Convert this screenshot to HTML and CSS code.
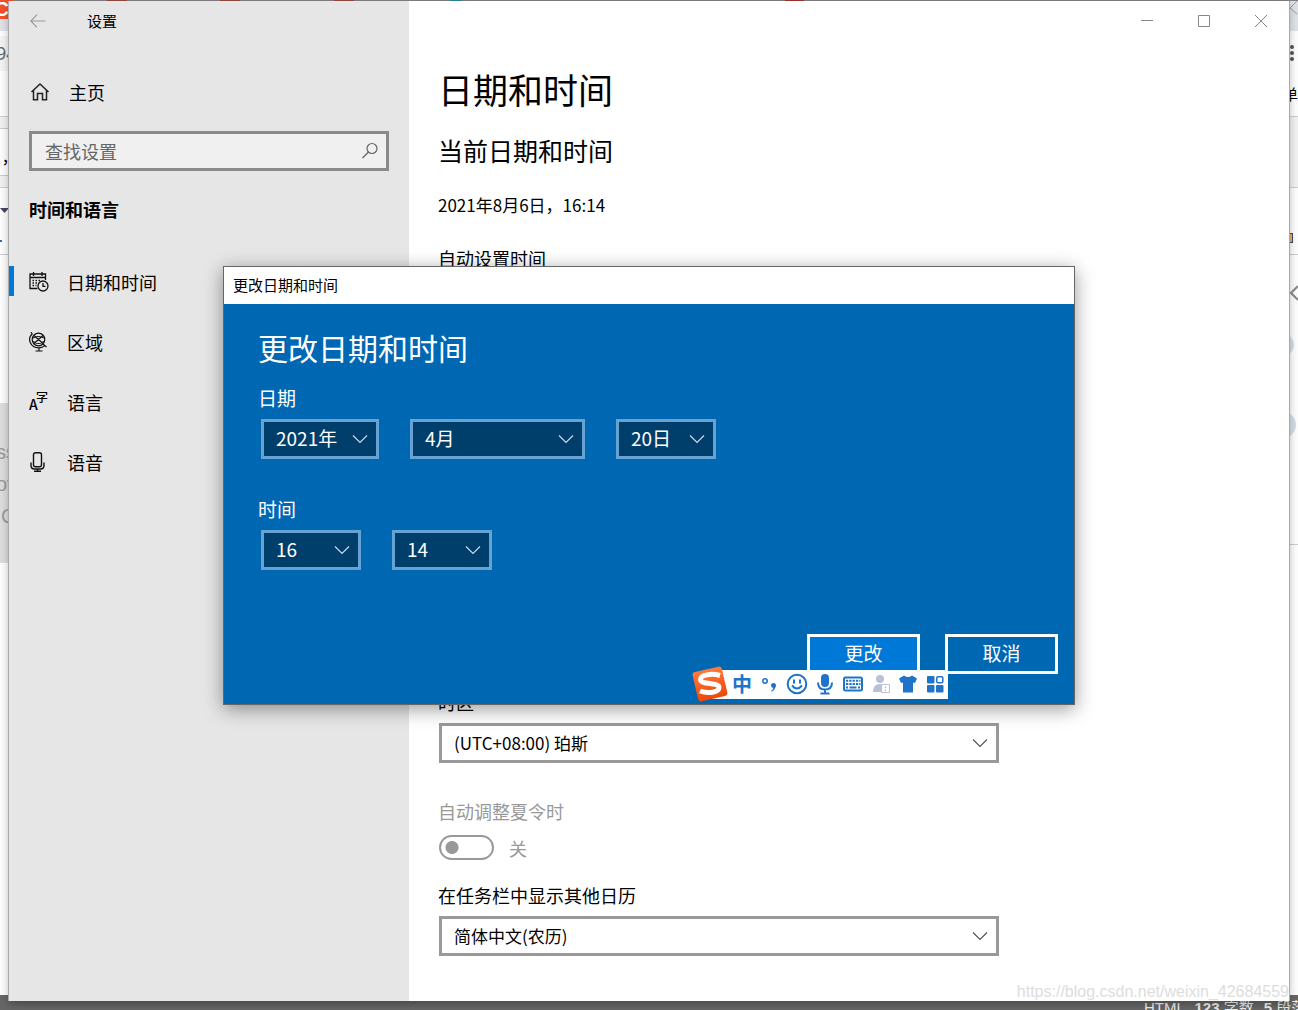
FILE: index.html
```html
<!DOCTYPE html>
<html lang="zh-CN">
<head>
<meta charset="utf-8">
<meta name="viewport" content="width=device-width, initial-scale=1">
<title>设置</title>
<link rel="stylesheet" href="styles.css">
</head>
<body>
<svg class="defs" aria-hidden="true">
  <symbol id="chevron" viewBox="0 0 16 10"><path d="M1 1.5 8 8.5 15 1.5" fill="none" stroke="currentColor" stroke-width="1.2"/></symbol>
</svg>
<div class="desktop">
  <div class="browser" aria-hidden="true">
    <div class="tabs"></div>
    <div class="page">
      <div class="edge">
        <div class="band favicon">C</div>
        <div class="band tabstrip tabstrip-left"></div>
        <div class="band gap"></div>
        <div class="band address">94</div>
        <div class="band bookmarks"></div>
        <div class="band shade"></div>
        <div class="band editor">,</div>
        <div class="band shade"></div>
        <div class="band tools"><svg width="9" height="5"><path d="M0 0h9L4.500 5z" fill="#446"/></svg><i class="dash"></i></div>
        <div class="band blank"></div>
        <div class="band code"><span>ss</span><span>ov</span><span>C</span></div>
      </div>
      <div class="edge">
        <div class="band tabstrip tabstrip-right"><svg width="9" height="14"><path d="M8 0 1 7l7 6" fill="none" stroke="#999"/></svg></div>
        <div class="band menu"><svg width="5" height="18" fill="#555"><circle cx="2" cy="3" r="2"/><circle cx="2" cy="9" r="2"/><circle cx="2" cy="15" r="2"/></svg></div>
        <div class="band save">单</div>
        <div class="band shade shade-tall"></div>
        <div class="band hint"><i></i></div>
        <div class="band rail"><svg width="8" height="260" fill="none"><path d="M8 1 1 8l7 7" stroke="#888" stroke-width="2"/><circle cx="-7" cy="60" r="11" fill="#d7dde3"/><circle cx="-7" cy="140" r="13" fill="#d3dce5"/></svg></div>
      </div>
    </div>
    <div class="status"><span class="status-text">HTML <b>123</b> 字数 <b>5</b> 段落</span></div>
  </div>

  <div class="window">
    <aside class="sidebar">
      <header class="titlebar">
        <button class="back" aria-label="后退"><svg width="16" height="14" viewBox="0 0 16 14"><path d="M15.500 7H1M7 .7.8 7 7 13.300" fill="none" stroke="#999" stroke-width="1.100"/></svg></button>
        <span class="app-name">设置</span>
      </header>
      <a class="home" href="#">
        <svg width="20" height="20" viewBox="0 0 20 20" fill="none" stroke="#222" stroke-width="1.500"><path d="M1.500 10 10 2l8.500 8M3.500 8.500v9.200h4v-6.200h5v6.200h4V8.500"/></svg>
        主页
      </a>
      <label class="search">
        <input type="text" placeholder="查找设置" aria-label="查找设置">
        <svg width="18" height="18" viewBox="0 0 18 18" fill="none" stroke="#666" stroke-width="1.200"><circle cx="11" cy="6.500" r="5"/><path d="M7.500 10 1.500 16"/></svg>
      </label>
      <h2 class="category">时间和语言</h2>
      <nav class="nav">
        <a class="active" href="#">
          <svg width="20" height="20" viewBox="0 0 20 20" fill="none" stroke="#111" stroke-width="1.300"><path d="M8.500 16.500H1V2h15.500v6M1 5.500h15.500M4.500 0v4M13 0v4"/><path d="M3.500 8.500h9M3.500 11h6M3.500 13.500h4" stroke-dasharray="1.500 1.500"/><circle cx="14" cy="14" r="5"/><path d="M14 11v3.300h2.500"/></svg>
          日期和时间
        </a>
        <a href="#">
          <svg width="20" height="20" viewBox="0 0 20 20" fill="none" stroke="#111" stroke-width="1.200"><circle cx="9.500" cy="7.500" r="6.300"/><path d="M2 0l1.500 2.500M3 2C-2 7 1.500 15.700 9.500 15.900c3 0 5-1 6.500-2.500M14 12l3.500 3M10 16v3M6.500 19h7M5 3.500l9 8M5 11.500l9-8M4 6q5.500-3 11 0M4 9.500q5.500 4 11 0"/></svg>
          区域
        </a>
        <a href="#">
          <svg class="glyphs" width="20" height="20" viewBox="0 0 20 20"><text x="0" y="18" font-size="14">A</text><text x="7" y="10" font-size="12">字</text></svg>
          语言
        </a>
        <a href="#">
          <svg width="20" height="20" viewBox="0 0 20 20" fill="none" stroke="#111" stroke-width="1.400"><rect x="4.500" y=".7" width="8" height="14" rx="2"/><path d="M2 10.500v3q0 3.500 3.500 3.500h6q3.500 0 3.500-3.500v-3M8.500 17v2.500M5 19.300h7"/></svg>
          语音
        </a>
      </nav>
    </aside>

    <main class="main">
      <header class="titlebar controls">
        <button aria-label="最小化"><svg width="12" height="12"><path d="M0 5.500h12" stroke="#888"/></svg></button>
        <button aria-label="最大化"><svg width="12" height="12"><path d="M.5.5h11v11H.5z" fill="none" stroke="#888"/></svg></button>
        <button aria-label="关闭"><svg width="12" height="12"><path d="M0 0l12 12M12 0 0 12" stroke="#888"/></svg></button>
      </header>
      <div class="content">
        <h1>日期和时间</h1>
        <h2 class="section">当前日期和时间</h2>
        <p class="now">2021年8月6日，16:14</p>
        <p class="auto">自动设置时间</p>
        <label class="zone-label" for="zone">时区</label>
        <div class="select wide">
          <select id="zone"><option>(UTC+08:00) 珀斯</option></select>
          <svg class="chevron"><use href="#chevron"/></svg>
        </div>
        <label class="dst-label" for="dst">自动调整夏令时</label>
        <div class="toggle">
          <input id="dst" type="checkbox" role="switch" disabled>
          <span>关</span>
        </div>
        <label class="calendar-label" for="calendar">在任务栏中显示其他日历</label>
        <div class="select wide">
          <select id="calendar"><option>简体中文(农历)</option></select>
          <svg class="chevron"><use href="#chevron"/></svg>
        </div>
      </div>
    </main>
    <div class="watermark">https://blog.csdn.net/weixin_42684559</div>
  </div>

  <section class="dialog" role="dialog" aria-labelledby="dialog-title">
    <header class="dialog-bar">更改日期和时间</header>
    <form class="dialog-body">
      <h2 id="dialog-title">更改日期和时间</h2>
      <fieldset>
        <legend>日期</legend>
        <div class="fields">
          <div class="select dark year"><select aria-label="年"><option>2021年</option></select><svg class="chevron"><use href="#chevron"/></svg></div>
          <div class="select dark month"><select aria-label="月"><option>4月</option></select><svg class="chevron"><use href="#chevron"/></svg></div>
          <div class="select dark"><select aria-label="日"><option>20日</option></select><svg class="chevron"><use href="#chevron"/></svg></div>
        </div>
      </fieldset>
      <fieldset>
        <legend>时间</legend>
        <div class="fields">
          <div class="select dark"><select aria-label="时"><option>16</option></select><svg class="chevron"><use href="#chevron"/></svg></div>
          <div class="select dark"><select aria-label="分"><option>14</option></select><svg class="chevron"><use href="#chevron"/></svg></div>
        </div>
      </fieldset>
      <div class="actions">
        <button class="primary" type="button">更改</button>
        <button type="button">取消</button>
      </div>
    </form>
    <div class="ime">
      <svg class="ime-logo" width="38" height="36" viewBox="0 0 38 36"><defs><linearGradient id="flame" x2="0" y2="1"><stop stop-color="#ff7a3c"/><stop offset="1" stop-color="#f0470a"/></linearGradient></defs><rect x="4" y="3" width="30" height="30" rx="3" fill="url(#flame)" transform="rotate(-13 19 18)"/><path d="M29 9.500C20 7 9.500 9 9.500 13.500c0 5.500 18.500 2.500 18.500 8 0 5-11 6.500-19 3.500" fill="none" stroke="#fff" stroke-width="5"/></svg>
      <span class="ime-mode">中</span>
      <svg width="20" height="20" viewBox="0 0 20 20"><circle cx="6" cy="7" r="2.200" fill="none" stroke="#1f74c9" stroke-width="1.600"/><path d="M12 11.500a2.500 2.500 0 1 1 4.700 1.200q-.8 3.500-4.200 5l-.3-.9q2-1.400 2.100-2.900-2.200-.2-2.300-2.400z" fill="#1f74c9"/></svg>
      <svg width="22" height="22" viewBox="0 0 22 22" fill="none" stroke="#1f74c9" stroke-width="2"><circle cx="11" cy="11" r="9.300"/><path d="M6 12.500q5 6 10 0M8 6.500v4M14 6.500v4"/></svg>
      <svg width="20" height="22" viewBox="0 0 20 22"><rect x="6" y="1" width="8" height="13" rx="4" fill="#1f74c9"/><path d="M3 9.500q0 7 7 7t7-7M10 16.500V21M5.500 20.500h9" fill="none" stroke="#1f74c9" stroke-width="2"/></svg>
      <svg width="22" height="18" viewBox="0 0 22 18"><rect x="2" y="2.500" width="18" height="13" rx="1.500" fill="none" stroke="#1f74c9" stroke-width="2"/><path d="M4 5.800h14.500M4 9h14.500" stroke="#1f74c9" stroke-width="2" stroke-dasharray="2.300 1"/><path d="M4 12.500h2M7.500 12.500h7M16 12.500h2" stroke="#1f74c9" stroke-width="2"/></svg>
      <svg width="20" height="20" viewBox="0 0 20 20"><circle cx="9" cy="5" r="4" fill="#b7c2d9"/><path d="M2 18q0-8 7-8 6 0 6 8z" fill="#b7c2d9"/><path d="M10.500 10.500h8v8h-8z" fill="#fff" stroke="#b7c2d9"/><path d="M14.500 12.500v1.500M14.500 15.500V17" stroke="#a5b2cc"/></svg>
      <svg width="20" height="20" viewBox="0 0 20 20"><path d="M6 1.500q4 3 8 0l5 3-2 4.500-2-.5V18.500H5V8.500L3 9 1 4.500z" fill="#1f74c9"/></svg>
      <svg width="20" height="20" viewBox="0 0 20 20" fill="#1f74c9"><rect x="2" y="2" width="7.500" height="7.500" rx="1"/><rect x="2" y="11" width="7.500" height="7.500" rx="1"/><rect x="11" y="11" width="7.500" height="7.500" rx="1"/><rect x="11.800" y="2.800" width="6" height="6" rx="1" fill="#fff" stroke="#1f74c9" stroke-width="1.500"/></svg>
    </div>
  </section>
</div>
</body>
</html>
```
FILE: styles.css
```css
* { box-sizing: border-box; }

body {
  margin: 0;
  font: 18px/24px "Noto Sans CJK SC", "Noto Sans", sans-serif;
  color: #000;
}

h1, h2, p { margin: 0; font-weight: 400; }
a { color: inherit; text-decoration: none; }
button { padding: 0; border: 0; background: none; font: inherit; color: inherit; }
svg { display: block; flex: none; }
.defs { position: absolute; width: 0; height: 0; }

.desktop { position: relative; display: grid; min-height: 100vh; overflow: hidden; }

/* Browser behind the settings window */
.browser { grid-area: 1 / 1; display: flex; flex-direction: column; min-width: 0; background: #fcfcfc; }
.tabs {
  height: 1px;
  background: linear-gradient(90deg, #f4502c 13px, #858083 13px 107px, #9a4a3e 107px 127px, #858083 127px 220px, #9a4a3e 220px 240px, #858083 240px 334px, #9a4a3e 334px 354px, #858083 354px 450px, #278aa3 450px 462px, #858083 462px 785px, #a53030 785px 804px, #858083 804px);
}
.page { flex: 1; display: flex; justify-content: space-between; }
.edge { width: 9px; overflow: hidden; }
.band { overflow: hidden; white-space: nowrap; border-bottom: 1px solid #ccc; }
.favicon { height: 18px; background: #f4502c; color: #fff; font: bold 20px/16px "Liberation Sans", sans-serif; direction: rtl; border: 0; }
.tabstrip { background: #dee1e6; border: 0; }
.tabstrip-left { height: 12px; }
.tabstrip-right { height: 30px; }
.gap { height: 5px; border: 0; }
.address { height: 35px; background: #f1f3f4; color: #666; font: 18px/34px "Noto Sans", sans-serif; text-indent: -4px; border: 0; }
.bookmarks { height: 46px; }
.shade { height: 12px; background: #f0f0f0; }
.editor { height: 47px; padding-left: 3px; line-height: 50px; }
.tools { height: 67px; padding-top: 20px; }
.dash { display: block; width: 2px; height: 2px; margin-top: 27px; background: #36c; }
.blank { height: 148px; border: 0; }
.code { height: 160px; padding-top: 33px; background: #dcdcdc; color: #999; font: 20px/32px "Liberation Sans", sans-serif; text-indent: -4px; border: 0; }
.code span { display: block; }
.code span:last-child { text-indent: 1px; }
.menu { height: 48px; padding: 13px 0 0 1px; border: 0; }
.save { height: 38px; line-height: 30px; direction: rtl; font-size: 15px; }
.shade-tall { height: 71px; }
.hint { height: 67px; padding-top: 45px; }
.hint i { display: block; width: 4px; height: 10px; border: 1px solid #446; background: #e9b060; }
.rail { height: 290px; padding: 30px 0 0 1px; }
.status { height: 15px; overflow: hidden; background: #666; color: #eee; }
.status-text { display: block; width: 154px; margin-left: auto; padding-top: 4px; font: 15px/18px "Liberation Sans", "Noto Sans CJK SC", sans-serif; white-space: pre; }
.status-text b { padding-left: 6px; }

/* Settings window */
.window {
  grid-area: 1 / 1;
  position: relative;
  display: flex;
  margin: 1px 9px 9px;
  background: #fff;
  box-shadow: 1px 0 #aaa, -1px 0 #aaa, 0 3px 8px rgba(0, 0, 0, .3);
}
.sidebar { width: 400px; flex: none; background: #e6e6e6; }
.titlebar { display: flex; align-items: center; height: 40px; font-size: 15px; }
.back { width: 58px; padding-left: 21px; }
.app-name { padding-left: 20px; }

.home { display: flex; align-items: center; gap: 19px; height: 40px; margin: 31px 20px 0 21px; }
.search {
  display: flex; align-items: center;
  height: 40px; margin: 19px 20px 0; padding: 0 7px 0 13px;
  border: 3px solid #8a8a8a; background: #f0f0f0;
}
.search input { flex: 1; min-width: 0; padding: 0; border: 0; outline: 0; background: none; font: inherit; }
.search input::placeholder { color: #666; opacity: 1; }
.category { margin: 18px 20px 0; font-size: 18px; line-height: 40px; font-weight: 700; }
.nav { margin-top: 23px; }
.nav a { display: flex; align-items: center; gap: 18px; height: 60px; padding-left: 20px; }
.nav .active { background: linear-gradient(#0078d7, #0078d7) 0 14px / 5px 30px no-repeat; }
.glyphs text { font-family: "Noto Sans CJK SC", sans-serif; font-weight: 500; }

.main { flex: 1; min-width: 0; }
.controls { justify-content: flex-end; }
.controls button { display: grid; place-items: center; width: 57px; height: 40px; }
.content { display: flex; flex-direction: column; align-items: flex-start; padding: 23px 30px 45px 29px; }
h1 { font-size: 35px; line-height: 50px; }
.section { margin-top: 18px; font-size: 25px; line-height: 36px; }
.now { margin-top: 25px; font-size: 17px; }
.auto { margin-top: 29px; }
.zone-label { margin-top: 420px; }
.dst-label { margin-top: 36px; color: #999; }
.calendar-label { margin-top: 23px; }

.select { position: relative; width: 100px; height: 40px; }
.select select {
  appearance: none; width: 100%; height: 100%; margin: 0; padding: 0 12px;
  border: 3px solid #999; border-radius: 0; background: #fff;
  font: inherit; color: inherit;
}
.chevron { position: absolute; top: 15px; right: 11px; width: 16px; height: 10px; color: #555; pointer-events: none; }
.content .wide { width: 100%; max-width: 560px; margin: 9px 0 0 1px; font-size: 17px; }

.toggle { display: flex; align-items: center; gap: 15px; height: 25px; margin: 12px 0 0 1px; color: #999; }
.toggle input {
  appearance: none; width: 55px; height: 25px; margin: 0;
  border: 2px solid #999; border-radius: 13px;
  background: radial-gradient(circle at 11px 50%, #999 6px, transparent 7px);
}

.watermark { position: absolute; right: 0; bottom: 0; font: 16px/18px "Liberation Sans", sans-serif; color: #ddd; }

/* Date and time dialog */
.dialog {
  position: absolute; top: 266px; left: 223px; width: 852px;
  border: 1px solid #666; background: #0067b3; color: #fff; font-size: 19px;
  box-shadow: 0 4px 18px rgba(0, 0, 0, .4);
}
.dialog-bar { padding-left: 9px; background: #fff; color: #000; font-size: 15px; line-height: 36px; padding-bottom: 1px; }
.dialog-body { padding: 23px 16px 30px 34px; }
.dialog-body h2 { margin-bottom: 18px; font-size: 30px; line-height: 40px; }
fieldset { min-width: 0; margin: 0 0 37px; padding: 0; border: 0; }
legend { padding: 0; line-height: 26px; }
.fields { display: flex; gap: 31px; padding: 8px 0 0 3px; }
.dark select { padding-bottom: 2px; border-color: #66a3d2; background: #003e6b; }
.dark .chevron { color: #ccdbe6; }
.year { width: 118px; }
.month { width: 175px; }
.actions { display: flex; justify-content: flex-end; gap: 25px; margin-top: 64px; }
.actions button { width: 113px; height: 40px; padding-bottom: 2px; border: 3px solid #fff; }
.actions .primary { background: #0078d7; }

.ime {
  position: absolute; left: 467px; bottom: 5px;
  display: flex; align-items: center; gap: 7px; width: 257px; height: 29px; padding-bottom: 1px;
  background: linear-gradient(90deg, transparent 17px, #fff 17px);
}
.ime-logo { margin-right: -4px; }
.ime-mode { width: 20px; color: #1f74c9; font-size: 20px; font-weight: 700; }
```
